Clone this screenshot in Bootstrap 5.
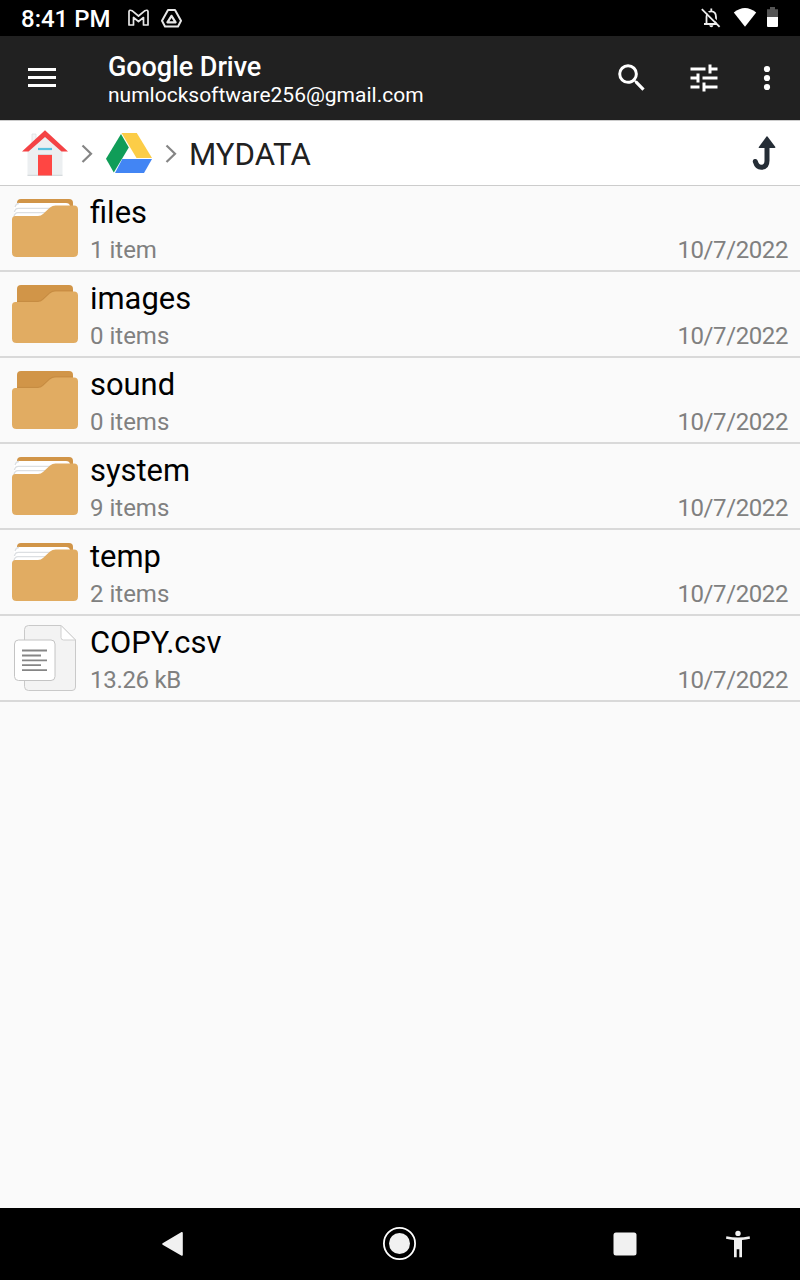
<!DOCTYPE html>
<html lang="en">
<head>
<meta charset="utf-8">
<meta name="viewport" content="width=device-width, initial-scale=1">
<title>Google Drive</title>
<link href="https://cdn.jsdelivr.net/npm/bootstrap@5.3.0/dist/css/bootstrap.min.css" rel="stylesheet">
<style>
body{font-family:Roboto,"Liberation Sans",sans-serif;background:#fafafa;height:1280px;color:#000;overflow:hidden}
svg{display:block;flex:none}
.status-bar{height:36px;background:#000;color:#fff;padding:0 21px}
.clock{font-size:24px;font-weight:500;line-height:36px;width:107px;padding-top:1px;white-space:nowrap}
.app-bar{height:84px;background:#212121;color:#fff;padding:0 28px}
.titles{margin-left:52px;padding-top:3px;white-space:nowrap}
.app-title{font-size:27px;font-weight:500;line-height:30px;letter-spacing:-.08px}
.app-sub{font-size:21px;line-height:26px}
.path-bar{height:66px;background:#fff;border-top:1px solid #ccc;border-bottom:1px solid #ccc;padding:0 24px 0 21px}
.crumb{font-size:31.2px;line-height:40px;color:#212121;margin-left:12px;padding-top:4px}
.list-group-flush>.entry,.list-group-flush>.entry:last-child{height:86px;border:0;border-bottom:2px solid #d9d9d9;background:transparent;padding:0 12px;color:#000}
.entry-name{font-size:30.9px;line-height:40px;padding-top:7px}
.entry-meta{font-size:24px;line-height:30px;color:#808080;margin-top:2px}
.entry-date{letter-spacing:-.4px}
.entry-size{letter-spacing:-.3px}
.nav-keys{height:72px;background:#000;padding-left:160px}
</style>
</head>
<body class="d-flex flex-column">
<svg width="0" height="0" class="position-absolute" aria-hidden="true">
<defs>
<g id="folder-front"><path d="M12 219.500Q12 216 15.500 216H38Q41 216 43 214L50 207.500Q52.500 205.500 55.500 205.500H74Q78 205.500 78 209.500V252.500Q78 257 73.500 257H16.500Q12 257 12 252.500Z" fill="#e1ac62"/></g>
<g id="folder-full"><path d="M17 208V203Q17 199 21 199H69Q73 199 73 203V212H17Z" fill="#d19548"/><path d="M14 218V207Q14.500 203 18 203H66Q69.500 203 70 206V218Z" fill="#fff"/><path d="M15 207Q16 203.500 19 203.500M14.500 212Q15 208.300 18.500 208.300H50M14 217Q14.500 212.700 18 212.700H45" fill="none" stroke="#dcdfe2" stroke-width="1.300"/><use href="#folder-front"/></g>
<g id="folder-empty"><path d="M17 218V203Q17 199 21 199H69Q73 199 73 203V218Z" fill="#d19548"/><path d="M17 215.400H38Q40.500 215.400 42.500 213.400L49.500 207Q52 204.900 55 204.900H73" fill="none" stroke="#c58b42" stroke-width="1"/><use href="#folder-front"/></g>
</defs>
</svg>

<header class="status-bar d-flex align-items-center">
<div class="clock">8:41 PM</div>
<svg width="22" height="36" viewBox="128 0 22 36"><path d="M129 11.500Q129.500 9.500 132 10.700L138.500 16L145 10.700Q147.500 9.500 148 11.500V25H143.500V17.500L138.500 21.500L133.500 17.500V25H129Z" fill="none" stroke="#e8e8e8" stroke-width="1.700" stroke-linejoin="round"/></svg>
<svg width="22" height="36" viewBox="161 0 22 36" style="margin-left:11px"><path d="M168 10H175L181 20.800L178 26.500H165L162 20.800Z" fill="none" stroke="#e8e8e8" stroke-width="2" stroke-linejoin="round"/><path d="M171.500 15.800L175.600 22.300H167.400Z" fill="none" stroke="#e8e8e8" stroke-width="2.200" stroke-linejoin="round"/></svg>
<div class="d-flex ms-auto">
<svg width="22" height="36" viewBox="700 0 22 36"><path d="M706.500 24V17Q706.500 11.300 711.300 11.300Q716 11.300 716 17V23M704 24H717M711.300 8.500V11" fill="none" stroke="#eee" stroke-width="1.800"/><path d="M709.200 25.300H713.400Q713 27.300 711.300 27.300Q709.600 27.300 709.200 25.300Z" fill="#eee"/><path d="M703.200 8L721 25.600" stroke="#000" stroke-width="2"/><path d="M701.800 9.200L719.600 26.900" stroke="#eee" stroke-width="1.800"/></svg>
<svg width="24" height="36" viewBox="733 0 24 36" style="margin-left:11px"><path d="M733.800 12.500Q745 3.500 756.200 12.500L745 26.800Z" fill="#fff"/></svg>
<svg width="12" height="36" viewBox="767 0 12 36" style="margin-left:10px"><path d="M767 17V9.200H770V7H775V9.200H778V17Z" fill="#555"/><path d="M767 17H778V26Q778 27 777 27H768Q767 27 767 26Z" fill="#fff"/></svg>
</div>
</header>

<nav class="app-bar d-flex align-items-center">
<svg width="28" height="84" viewBox="28 36 28 84"><path d="M28 68h28v3H28zM28 76h28v3H28zM28 84h28v3H28z" fill="#fff"/></svg>
<div class="titles"><div class="app-title">Google Drive</div><div class="app-sub">numlocksoftware256@gmail.com</div></div>
<svg class="ms-auto" width="28" height="84" viewBox="618 36 28 84"><g transform="translate(613.700 59.700) scale(1.510)"><path fill="#fff" d="M15.500 14h-.79l-.28-.27A6.471 6.471 0 0 0 16 9.500 6.500 6.500 0 1 0 9.500 16c1.610 0 3.090-.59 4.230-1.570l.27.28v.79l5 4.990L20.490 19l-4.990-5zm-6 0C7.010 14 5 11.990 5 9.500S7.010 5 9.500 5 14 7.010 14 9.500 11.990 14 9.500 14z"/></g></svg>
<svg width="28" height="84" viewBox="690 36 28 84" style="margin-left:44px"><g transform="translate(686 60) scale(1.500)"><path fill="#fff" d="M3 17v2h6v-2H3zM3 5v2h10V5H3zm10 16v-2h8v-2h-8v-2h-2v6h2zM7 9v2H3v2h4v2h2V9H7zm14 4v-2H11v2h10zm-6-4h2V7h4V5h-4V3h-2v6z"/></g></svg>
<svg width="8" height="84" viewBox="763 36 8 84" style="margin-left:45px;margin-right:1px"><g fill="#fff"><circle cx="767" cy="69" r="3.100"/><circle cx="767" cy="78" r="3.100"/><circle cx="767" cy="87" r="3.100"/></g></svg>
</nav>

<nav class="path-bar d-flex align-items-center">
<svg width="48" height="64" viewBox="21 121 48 64"><path d="M32 134H36V144H32Z" fill="#f4f5f6" stroke="#dde1e4" stroke-width=".8"/><path d="M27.500 150L45 135L62.500 150V175.500H27.500Z" fill="#eceff1"/><path d="M27.500 175.300H62.500" stroke="#cfd4d7" stroke-width="1"/><path d="M22 151.500L45 130.300L68 151.500H61.500L45 137L28.500 151.500Z" fill="#f44345"/><path d="M38 155H52V175.500H38Z" fill="#ff4643"/><path d="M38 154.500H52" stroke="#d8d9da"/><path d="M38 149H52" stroke="#57c1df" stroke-width="2.200"/></svg>
<svg width="12" height="64" viewBox="81 121 12 64" style="margin-left:12px"><path d="M82.500 145.500L91 153.700L82.500 162" fill="none" stroke="#858585" stroke-width="2.200"/></svg>
<svg width="48" height="64" viewBox="105 121 48 64" style="margin-left:12px"><path d="M121 134L106 158.800L113.800 172.500L128.800 147.500Z" fill="#109d58"/><path d="M121.500 133H136.800L152 158H136.500Z" fill="#fccd47"/><path d="M122.300 159H152L144 173H115Z" fill="#4285f4"/></svg>
<svg width="12" height="64" viewBox="165 121 12 64" style="margin-left:12px"><path d="M166.500 145.500L175 153.700L166.500 162" fill="none" stroke="#858585" stroke-width="2.200"/></svg>
<div class="crumb">MYDATA</div>
<svg class="ms-auto" width="24" height="64" viewBox="752 121 24 64"><path d="M767 145V160.500Q767 167.300 761.200 167.300Q757 167.300 755.300 161.500" fill="none" stroke="#252d36" stroke-width="5" stroke-linecap="round"/><path d="M758.800 147L766.500 136.500Q767 136 767.500 136.500L775.400 147Q775.500 148 774.500 148H759.500Q758.400 148 758.800 147Z" fill="#252d36"/></svg>
</nav>

<main class="list-group list-group-flush flex-grow-1">
<div class="list-group-item entry d-flex"><svg width="66" height="84" viewBox="12 186 66 84"><use href="#folder-full"/></svg><div class="flex-grow-1 ps-2 ms-1"><div class="entry-name">files</div><div class="entry-meta d-flex justify-content-between"><span>1 item</span><span class="entry-date">10/7/2022</span></div></div></div>
<div class="list-group-item entry d-flex"><svg width="66" height="84" viewBox="12 186 66 84"><use href="#folder-empty"/></svg><div class="flex-grow-1 ps-2 ms-1"><div class="entry-name">images</div><div class="entry-meta d-flex justify-content-between"><span>0 items</span><span class="entry-date">10/7/2022</span></div></div></div>
<div class="list-group-item entry d-flex"><svg width="66" height="84" viewBox="12 186 66 84"><use href="#folder-empty"/></svg><div class="flex-grow-1 ps-2 ms-1"><div class="entry-name">sound</div><div class="entry-meta d-flex justify-content-between"><span>0 items</span><span class="entry-date">10/7/2022</span></div></div></div>
<div class="list-group-item entry d-flex"><svg width="66" height="84" viewBox="12 186 66 84"><use href="#folder-full"/></svg><div class="flex-grow-1 ps-2 ms-1"><div class="entry-name">system</div><div class="entry-meta d-flex justify-content-between"><span>9 items</span><span class="entry-date">10/7/2022</span></div></div></div>
<div class="list-group-item entry d-flex"><svg width="66" height="84" viewBox="12 186 66 84"><use href="#folder-full"/></svg><div class="flex-grow-1 ps-2 ms-1"><div class="entry-name">temp</div><div class="entry-meta d-flex justify-content-between"><span>2 items</span><span class="entry-date">10/7/2022</span></div></div></div>
<div class="list-group-item entry d-flex"><svg width="66" height="84" viewBox="12 616 66 84"><path d="M28.500 625.500H61L75.500 640V687Q75.500 690.500 72 690.500H28.500Q24.500 690.500 24.500 686.500V629.500Q24.500 625.500 28.500 625.500Z" fill="#f3f3f3" stroke="#c9c9c9"/><path d="M61 625.500L75.500 640H63.500Q61 640 61 637.500Z" fill="#fff" stroke="#cfcfcf"/><rect x="14.500" y="640" width="40.500" height="40.500" rx="4" fill="#fff" stroke="#c4c4c4"/><path d="M22 650.500H47M22 655.500H41M22 660.300H47M22 665.200H41M22 670.200H47" stroke="#858585" stroke-width="1.800"/></svg><div class="flex-grow-1 ps-2 ms-1"><div class="entry-name">COPY.csv</div><div class="entry-meta d-flex justify-content-between"><span class="entry-size">13.26 kB</span><span class="entry-date">10/7/2022</span></div></div></div>
</main>

<footer class="nav-keys d-flex align-items-center">
<svg width="24" height="72" viewBox="160 1208 24 72"><path d="M182 1232.800V1255L163 1244Z" fill="#f1f1f1" stroke="#f1f1f1" stroke-width="1.600" stroke-linejoin="round"/></svg>
<svg width="34" height="72" viewBox="382 1208 34 72" style="margin-left:198px"><circle cx="399.500" cy="1243.500" r="15.600" fill="none" stroke="#fff" stroke-width="1.800"/><circle cx="399.500" cy="1243.500" r="10.500" fill="#f1f1f1"/></svg>
<svg width="24" height="72" viewBox="613 1208 24 72" style="margin-left:197px"><rect x="613.500" y="1232.500" width="23" height="23" rx="2.500" fill="#f1f1f1"/></svg>
<svg width="26" height="72" viewBox="725 1208 26 72" style="margin-left:88px"><circle cx="738" cy="1233.400" r="2.700" fill="#f1f1f1"/><path d="M726.400 1236.200Q738 1239 749.600 1236.200L750 1238.700Q746 1239.700 742 1240V1257.300H739.300V1249.300H736.700V1257.300H734V1240Q730 1239.700 726 1238.700Z" fill="#f1f1f1"/></svg>
</footer>
<script src="https://cdn.jsdelivr.net/npm/bootstrap@5.3.0/dist/js/bootstrap.bundle.min.js"></script>
</body>
</html>
